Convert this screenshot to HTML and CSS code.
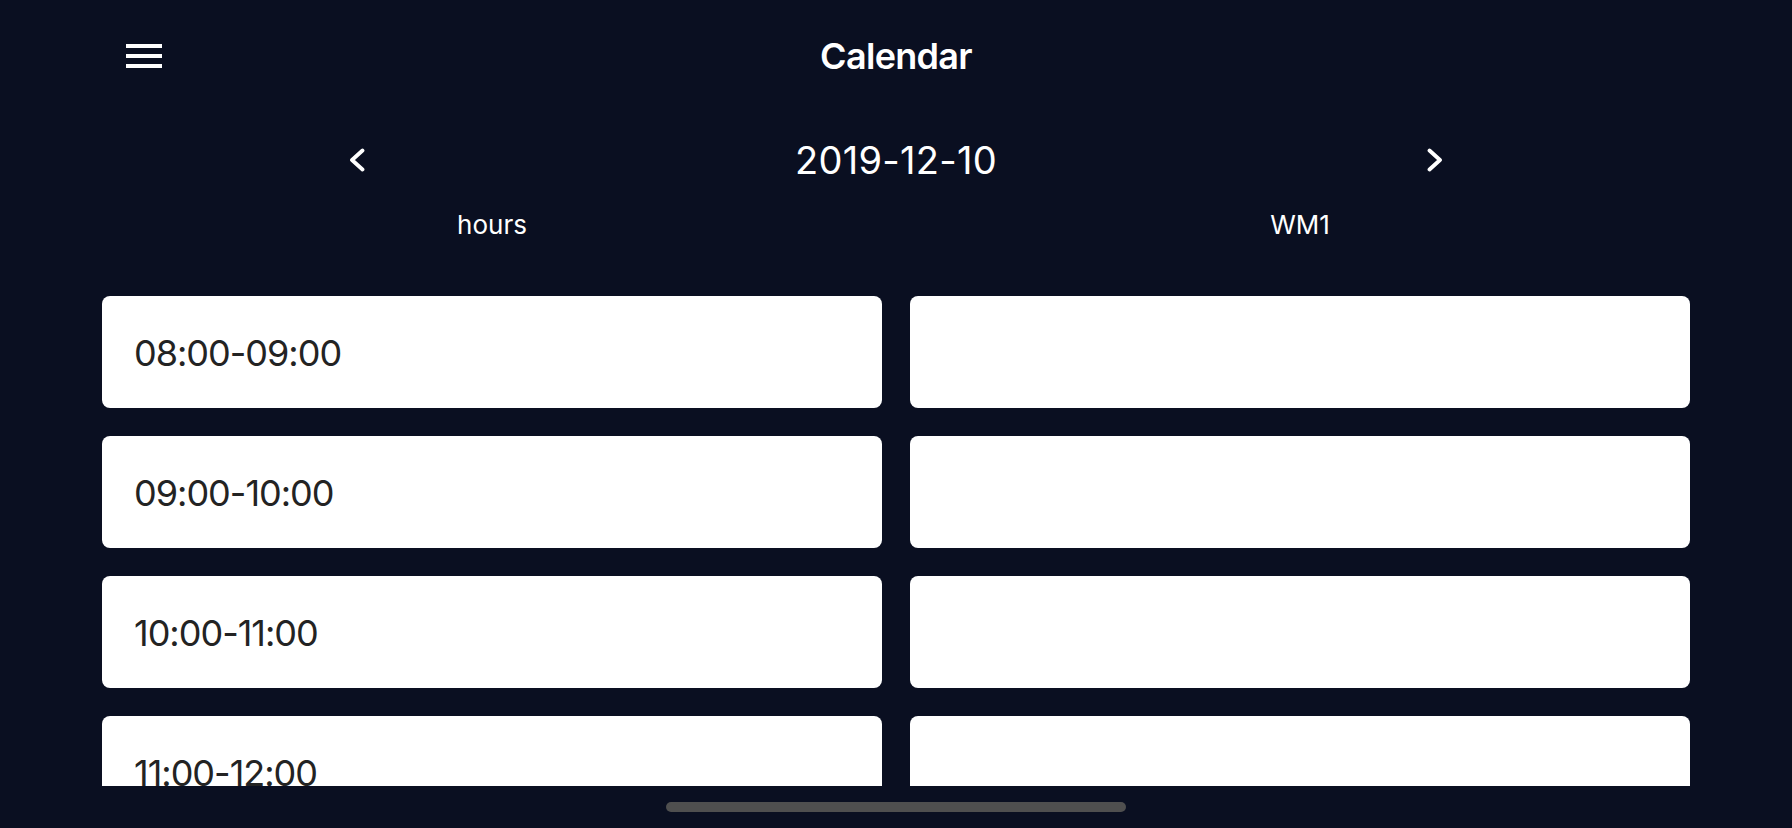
FILE: index.html
```html
<!DOCTYPE html>
<html lang="en">
<head>
<meta charset="utf-8">
<title>Calendar</title>
<link rel="stylesheet" href="styles.css">
</head>
<body>
<div class="app">
  <header class="topbar">
    <button class="menu" aria-label="Menu">
      <svg width="36" height="24" viewBox="0 0 36 24"><rect x="0" y="0" width="36" height="4" fill="#fff"/><rect x="0" y="10" width="36" height="4" fill="#fff"/><rect x="0" y="20" width="36" height="4" fill="#fff"/></svg>
    </button>
    <h1 class="title">Calendar</h1>
    <div class="spacer"></div>
  </header>
  <div class="datebar">
    <button class="chev" aria-label="Previous day">
      <svg width="16" height="24" viewBox="0 0 16 24"><polyline points="13.5,2.5 3,12 13.5,21.5" fill="none" stroke="#fff" stroke-width="3.8" stroke-linecap="round" stroke-linejoin="round"/></svg>
    </button>
    <div class="date">2019-12-10</div>
    <button class="chev" aria-label="Next day">
      <svg width="16" height="24" viewBox="0 0 16 24"><polyline points="2.5,2.5 13,12 2.5,21.5" fill="none" stroke="#fff" stroke-width="3.8" stroke-linecap="round" stroke-linejoin="round"/></svg>
    </button>
  </div>
  <div class="labels">
    <div class="label">hours</div>
    <div class="label">WM1</div>
  </div>
  <div class="list">
    <div class="grid">
      <div class="card">08:00-09:00</div><div class="card"></div>
      <div class="card">09:00-10:00</div><div class="card"></div>
      <div class="card">10:00-11:00</div><div class="card"></div>
      <div class="card">11:00-12:00</div><div class="card"></div>
    </div>
  </div>
  <footer class="homebar"><div class="indicator"></div></footer>
</div>
</body>
</html>
```
FILE: styles.css
```css
* { box-sizing: border-box; }
html, body { margin: 0; padding: 0; }
body {
  background: #0a0f21;
  color: #fff;
  font-family: Inter, "Noto Sans", "Liberation Sans", sans-serif;
  width: 1792px;
  height: 828px;
  overflow: hidden;
}
.app { display: flex; flex-direction: column; height: 828px; }
button { background: none; border: 0; padding: 0; margin: 0; cursor: pointer; display: flex; }
.topbar {
  height: 112px;
  display: grid;
  grid-template-columns: 1fr auto 1fr;
  align-items: center;
  padding: 0 126px;
}
.menu { justify-self: start; }
.title {
  margin: 0;
  font-size: 36px;
  font-weight: 600;
  letter-spacing: -0.7px;
  line-height: 1;
}
.datebar {
  height: 94px;
  width: 1094px;
  margin: 0 auto;
  display: flex;
  align-items: center;
  justify-content: space-between;
  padding-top: 2px;
}
.date {
  font-size: 38px;
  font-weight: 400;
  line-height: 1;
  letter-spacing: 0.3px;
}
.labels {
  display: grid;
  grid-template-columns: 1fr 1fr;
  column-gap: 28px;
  padding: 1px 102px 53px;
}
.label {
  text-align: center;
  font-size: 26px;
  line-height: 36px;
}
.list {
  height: 490px;
  overflow: hidden;
  padding: 0 102px;
}
.grid {
  display: grid;
  grid-template-columns: 1fr 1fr;
  gap: 28px;
}
.card {
  height: 112px;
  background: #fff;
  border-radius: 8px;
  color: #232323;
  font-size: 36px;
  display: flex;
  align-items: center;
  padding: 2px 0 0 32px;
  letter-spacing: -1px;
}
.homebar {
  flex: 1;
  display: flex;
  justify-content: center;
  padding-top: 16px;
}
.indicator {
  width: 460px;
  height: 10px;
  border-radius: 5px;
  background: #4f4f4f;
}
```
